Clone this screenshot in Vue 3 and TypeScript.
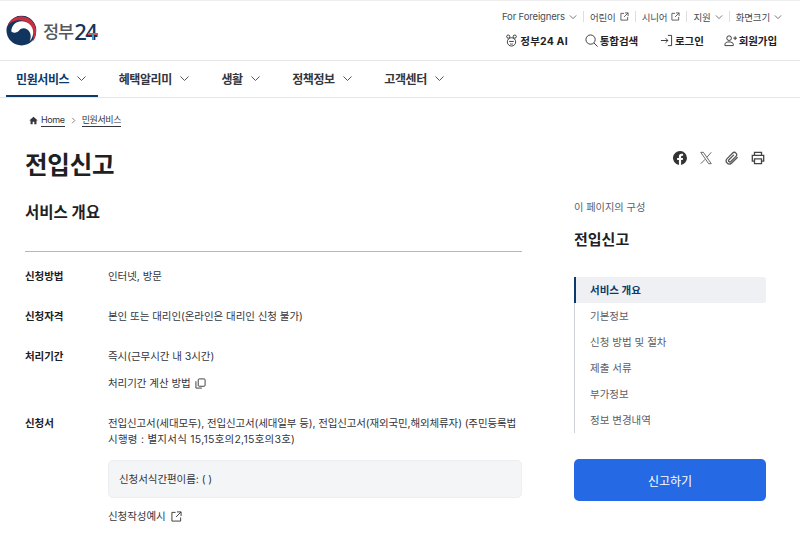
<script setup lang="ts">
const navs = ['민원서비스', '혜택알리미', '생활', '정책정보', '고객센터']
const toc = ['서비스 개요', '기본정보', '신청 방법 및 절차', '제출 서류', '부가정보', '정보 변경내역']
</script>

<template>
  <div class="page">
    <header class="top">
      <a class="logo">
        <svg width="31" height="31" viewBox="0 0 32 32">
          <circle cx="16" cy="16" r="15.500" fill="#12355f" />
          <path d="M1.200 11.500 A15.500 15.500 0 0 1 31.500 16 C31.500 21 30 25 27.500 28 L29 30 L33 30 L33 -1 L-1 -1 L-1 11 Z" fill="#fff" />
          <path d="M1.500 11 A15.300 15.300 0 0 1 31 17 C31 21 30 24.500 27.500 27.500 C30.500 19 25 5.500 14.500 5.500 C8.500 5.500 4.500 8 1.500 11 Z" fill="#c8303f" />
          <path d="M5.500 17 C5.500 10.500 10.500 6.500 16 6.500 C23 6.500 28.500 12 28 18.500 C27.800 22 26.500 24.500 24.500 27 C26.500 22.500 25.500 17.500 22 15 C19 13 15.500 13.500 13.500 16 C11.500 18.500 8 19 5.500 17 Z" fill="#fff" />
        </svg>
        <span class="logo-ko">정부</span><span class="logo-num">2<span class="four">4<i class="plus-h"></i><i class="plus-v"></i></span></span>
      </a>
      <div class="utils">
        <div class="row1">
          <a>For Foreigners <svg class="chev" viewBox="0 0 10 10"><path d="M1 3l4 4 4-4" /></svg></a><i class="sep"></i>
          <a>어린이 <svg class="ext" viewBox="0 0 10 10"><path d="M4.500 1.500H1v7.500h7.500V5.500M5.500 1H9v3.500M9 1L4.500 5.500" /></svg></a><i class="sep"></i>
          <a>시니어 <svg class="ext" viewBox="0 0 10 10"><path d="M4.500 1.500H1v7.500h7.500V5.500M5.500 1H9v3.500M9 1L4.500 5.500" /></svg></a><i class="sep"></i>
          <a>지원 <svg class="chev" viewBox="0 0 10 10"><path d="M1 3l4 4 4-4" /></svg></a><i class="sep"></i>
          <a>화면크기 <svg class="chev" viewBox="0 0 10 10"><path d="M1 3l4 4 4-4" /></svg></a>
        </div>
        <div class="row2">
          <a class="r-ai"><svg class="ic" viewBox="0 0 14 14"><circle cx="7" cy="8.500" r="4.500" /><circle cx="3.500" cy="2.800" r="1.700" /><circle cx="10.500" cy="2.800" r="1.700" /><path d="M4.500 8h5M5.500 10.500c.8.600 2.200.600 3 0" /></svg>정부24 AI</a>
          <a class="r-search"><svg class="ic" viewBox="0 0 14 14"><circle cx="6" cy="6" r="5" /><path d="M9.600 9.600L13.500 13.500" /></svg>통합검색</a>
          <a class="r-login"><svg class="ic" viewBox="0 0 14 14"><path d="M1 7h7.500M6 4.500L8.500 7 6 9.500M8.500 1.500h4v11h-4" /></svg>로그인</a>
          <a class="r-join"><svg class="ic" viewBox="0 0 14 14"><circle cx="5.500" cy="4.500" r="2.500" /><path d="M1 12.500v-1.500c0-1.500 2-2.500 4.500-2.500S10 9.500 10 11v1.500zM10 4.500h4M12 2.500v4" /></svg>회원가입</a>
        </div>
      </div>
    </header>

    <nav class="nav">
      <a v-for="(n, i) in navs" :key="n" :class="['nav-item', { active: i === 0 }]">
        {{ n }}
        <svg viewBox="0 0 9 9"><path d="M.5 2.500L4.500 6.500l4-4" /></svg>
      </a>
    </nav>

    <main class="main">
      <div class="crumbs">
        <svg viewBox="0 0 10 10" class="home"><path d="M5 .8L.3 5h1.400v4.200h2.400V6.500h1.800v2.700h2.400V5h1.400z" /></svg>
        <a>Home</a>
        <svg viewBox="0 0 8 8" class="gt"><path d="M2.500 1l3 3-3 3" /></svg>
        <a>민원서비스</a>
      </div>

      <div class="title-row">
        <h1>전입신고</h1>
        <div class="share">
          <svg viewBox="0 0 16 16"><path fill="#333" d="M16 8a8 8 0 1 0-9.250 7.900v-5.600H4.700V8h2.050V6.250c0-2 1.200-3.100 3-3.100.9 0 1.800.15 1.800.15v2h-1c-1 0-1.300.6-1.300 1.250V8h2.200l-.35 2.300H9.250v5.600A8 8 0 0 0 16 8z" /></svg>
          <svg viewBox="0 0 16 16"><path fill="none" stroke="#555" stroke-width="1" d="M2 1.500h3l9 13h-3zM14 1.500L9 7.200M7 9.500l-5 5" /></svg>
          <svg viewBox="0 0 16 16"><path fill="none" stroke="#555" stroke-width="1.500" stroke-linecap="round" d="M14 7.500l-6 6c-1.700 1.700-4.200 1.700-5.600.3s-1.300-3.800.3-5.400l5.800-5.800c1.200-1.200 3-1.200 4-.2s1 2.800-.2 4L6.700 12c-.7.700-1.700.7-2.300.1s-.6-1.500.1-2.200L9.800 4.700" /></svg>
          <svg viewBox="0 0 16 16"><path fill="none" stroke="#444" stroke-width="1.500" d="M4 5V1.500h8V5M4 11.500H1.500V5h13v6.500H12M4 9h8v5.500H4z" /></svg>
        </div>
      </div>

      <div class="columns">
        <section class="content">
          <h2>서비스 개요</h2>
          <div class="info">
            <div class="row r1"><dt>신청방법</dt><dd>인터넷, 방문</dd></div>
            <div class="row r1"><dt>신청자격</dt><dd>본인 또는 대리인(온라인은 대리인 신청 불가)</dd></div>
            <div class="row r2">
              <dt>처리기간</dt>
              <dd>
                <p>즉시(근무시간 내 3시간)</p>
                <p class="link">처리기간 계산 방법
                  <svg class="copy" viewBox="0 0 12 12"><rect x="3.500" y="1" width="7.500" height="8" rx="1" /><path d="M1 3.500V11h6.500" /></svg>
                </p>
              </dd>
            </div>
            <div class="row last">
              <dt>신청서</dt>
              <dd>
                <p class="forms"><span class="l1">전입신고서(세대모두), 전입신고서(세대일부 등), 전입신고서(재외국민,해외체류자) (주민등록법</span> <span class="l2">시행령 : 별지서식 15,15호의2,15호의3호)</span></p>
                <div class="box">신청서식간편이름: ( )</div>
                <p class="link">신청작성예시
                  <svg class="out" viewBox="0 0 12 12"><path d="M5 1.500H1v9.500h9.500V7M6.500 1H11v4.500M11 1L5.500 6.500" /></svg>
                </p>
              </dd>
            </div>
          </div>
        </section>

        <aside class="side">
          <p class="side-cap">이 페이지의 구성</p>
          <h3>전입신고</h3>
          <ul class="toc">
            <li v-for="(t, i) in toc" :key="t" :class="{ on: i === 0 }">{{ t }}</li>
          </ul>
          <button class="cta">신고하기</button>
        </aside>
      </div>
    </main>
  </div>
</template>

<style scoped>
.page {
  width: 800px;
  height: 533px;
  overflow: hidden;
  background: #fff;
  font-family: Inter, "Noto Sans CJK KR", sans-serif;
  color: #1e2124;
  border-top: 1px solid #eee;
  box-sizing: border-box;
}
a { color: inherit; text-decoration: none; }
p, h1, h2, h3, ul, dd { margin: 0; padding: 0; }
.top {
  height: 60px;
  box-sizing: border-box;
  border-bottom: 1px solid #e4e6e8;
  display: flex;
  justify-content: space-between;
  padding: 0 18px 0 6px;
}
.logo { display: flex; align-items: center; height: 59px; }
.logo svg { margin-right: 6px; }
.logo-ko { font-size: 17.500px; color: #55595e; font-weight: 500; letter-spacing: -1px; margin-right: 1px; }
.logo-num { font-size: 22px; color: #12355f; font-weight: 500; letter-spacing: -1.500px; line-height: 1; font-family: "Noto Sans", sans-serif; }
.four { position: relative; display: inline-block; }
.plus-h { position: absolute; left: 3px; top: 13px; width: 10px; height: 2px; background: #d9564a; }
.plus-v { position: absolute; left: 7px; top: 14px; width: 2px; height: 6px; background: #3d9bc9; }
.utils { display: flex; flex-direction: column; align-items: flex-end; padding-top: 9px; }
.row1 { display: flex; align-items: center; font-size: 9.500px; color: #464c53; height: 13px; }
.row1 a { display: flex; align-items: center; gap: 4px; letter-spacing: -0.15px; }
.sep { width: 1px; height: 11px; background: #dcdfe2; margin: 0 6px; }
.chev, .ext { width: 8px; height: 8px; fill: none; stroke: #555; stroke-width: 1; }
.ext { width: 9px; height: 9px; }
.row2 { display: flex; font-size: 10.500px; font-weight: 700; color: #1e2124; margin-top: 9px; margin-right: 5px; height: 16px; align-items: center; letter-spacing: -0.1px; }
.row2 a { display: flex; align-items: center; gap: 2px; }
.r-ai { letter-spacing: 0.2px; }
.r-search { margin-left: 17px; }
.r-login { margin-left: 22px; }
.r-join { margin-left: 20px; }
.ic { width: 13px; height: 13px; fill: none; stroke: #333; stroke-width: 1; }
.nav { height: 37px; box-sizing: border-box; border-bottom: 1px solid #e4e6e8; display: flex; padding-left: 6px; }
.nav-item {
  display: flex; align-items: center; gap: 8px; height: 35px; padding: 0 12px 0 10px;
  margin-right: 10.500px; font-size: 12px; font-weight: 600; color: #33363d; letter-spacing: -0.4px;
}
.nav-item svg { width: 9px; height: 9px; fill: none; stroke: #555; stroke-width: 1; }
.nav-item.active { color: #0b3a6b; font-weight: 700; position: relative; }
.nav-item.active::after { content: ""; position: absolute; left: 0; right: 0; top: 34px; height: 2px; background: #0b3a6b; }
.main { padding: 0 34px 0 25px; }
.crumbs { display: flex; align-items: center; margin: 14px 0 0 4px; height: 16px; font-size: 9px; color: #33363d; letter-spacing: -0.4px; }
.crumbs a { border-bottom: 1px solid #33363d; line-height: 12px; }
.home { width: 9px; height: 9px; fill: #33363d; margin-right: 3px; }
.gt { width: 7px; height: 7px; fill: none; stroke: #777; margin: 0 5px; }
.title-row { display: flex; justify-content: space-between; align-items: center; margin-top: 15px; height: 40px; }
h1 { font-size: 24.500px; font-weight: 700; color: #1e2124; letter-spacing: -0.2px; }
.share { display: flex; gap: 12px; margin-top: -10px; margin-right: 1px; }
.share svg { width: 14px; height: 14px; }
.columns { display: flex; justify-content: space-between; margin-top: 19px; }
.content { width: 497px; }
h2 { font-size: 15.500px; font-weight: 700; line-height: 22px; height: 49px; }
.info { border-top: 1px solid #b1b8be; padding-top: 16px; font-size: 10.500px; color: #33363d; letter-spacing: -0.06px; }
.row { display: flex; line-height: 17px; }
.r1 { margin-bottom: 23px; }
.r2 { margin-bottom: 24px; }
.last dt { line-height: 16px; }
dt { width: 83px; flex: none; font-weight: 700; color: #1e2124; }
dd { flex: 1; }
.link { margin-top: 10px; display: flex; align-items: center; gap: 4px; }
.copy { width: 11px; height: 11px; fill: none; stroke: #333; stroke-width: 1; }
.out { width: 11px; height: 11px; fill: none; stroke: #333; stroke-width: 1; margin-left: 1px; }
.forms { line-height: 16px; }
.l1 { letter-spacing: -0.13px; }
.l2 { letter-spacing: 0.25px; }
.box {
  margin-top: 12px; height: 38px; background: #f4f5f6; border: 1px solid #eceef0; border-radius: 5px;
  box-sizing: border-box; display: flex; align-items: center; padding-left: 10px;
}
.side { width: 192px; margin-top: -4px; }
.side-cap { font-size: 10.200px; color: #5a6068; line-height: 14px; margin-top: 2px; }
h3 { font-size: 15px; font-weight: 700; margin-top: 15px; line-height: 22px; }
.toc { list-style: none; margin-top: 26px; border-left: 1px solid #cdd1d5; }
.toc li { height: 26px; line-height: 28px; padding-left: 15px; font-size: 10.500px; color: #5a6068; }
.toc li.on { background: #eef0f3; color: #0b3a6b; font-weight: 700; border-left: 2px solid #0b3a6b; margin-left: -1px; padding-left: 14px; border-radius: 0 3px 3px 0; }
.cta {
  margin-top: 26px; width: 192px; height: 42px; background: #256ae4; color: #fff; border: 0; border-radius: 5px;
  font-family: inherit; font-size: 12px; font-weight: 400;
}
</style>
